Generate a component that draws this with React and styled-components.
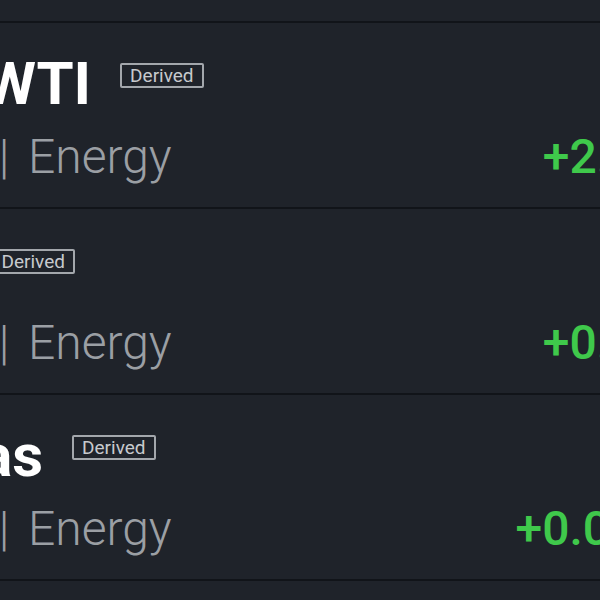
import React from 'react'
import styled, { createGlobalStyle } from "styled-components";

const GlobalStyle = createGlobalStyle`
  html, body {
    margin: 0;
    padding: 0;
    background: #1f232a;
    overflow: hidden;
  }
  body {
    font-family: Roboto, "Liberation Sans", sans-serif;
  }
`;

const Viewport = styled.div`
  width: 600px;
  height: 600px;
  overflow: hidden;
  background: #1f232a;
`;

const Track = styled.div`
  width: 1000px;
  margin-left: -273px;
  margin-top: -163px;
  display: flex;
  flex-direction: column;
`;

const Row = styled.div`
  height: 186px;
  box-sizing: border-box;
  padding: 25px 0 23px;
  display: flex;
  flex-direction: column;
  gap: 8px;
  border-bottom: 2px solid #111419;
`;

const Header = styled.div`
  display: flex;
  align-items: flex-start;
  gap: 29px;
`;

const Title = styled.span`
  font-size: 60px;
  line-height: 72px;
  font-weight: 700;
  color: #ffffff;
  white-space: nowrap;
`;

const Badge = styled.span`
  margin-top: 15px;
  height: 25px;
  box-sizing: border-box;
  padding: 0 8px;
  border: 2px solid #a3a7ac;
  border-radius: 2px;
  font-size: 19px;
  line-height: 21px;
  color: #c7cace;
  white-space: nowrap;
`;

const SubLine = styled.div`
  display: flex;
  justify-content: space-between;
  align-items: baseline;
  padding-right: 27px;
`;

const Category = styled.span`
  margin-left: -30px;
  font-size: 48px;
  line-height: 58px;
  font-weight: 300;
  word-spacing: 7px;
  color: #9b9fa4;
  white-space: nowrap;
`;

const Change = styled.span`
  font-size: 48px;
  line-height: 58px;
  font-weight: 500;
  color: ${(p) => (p.$up ? "#3fc94b" : "#e5484d")};
  white-space: nowrap;
`;

const items = [
  { title: "Heating Oil", code: "HO", change: "+1.27%" },
  { title: "Crude oil WTI", code: "CL", change: "+2.14%" },
  { title: "Gasoline", code: "RB", change: "+0.92%" },
  { title: "Natural Gas", code: "NG", change: "+0.043%" },
  { title: "Brent Crude", code: "BZ", change: "+1.58%" },
];

export default function App() {
  return (
    <>
      <GlobalStyle />
      <Viewport>
        <Track>
          {items.map((it) => (
            <Row key={it.code}>
              <Header>
                <Title>{it.title}</Title>
                <Badge>Derived</Badge>
              </Header>
              <SubLine>
                <Category>Commodities | Energy</Category>
                <Change $up>{it.change}</Change>
              </SubLine>
            </Row>
          ))}
        </Track>
      </Viewport>
    </>
  );
}
